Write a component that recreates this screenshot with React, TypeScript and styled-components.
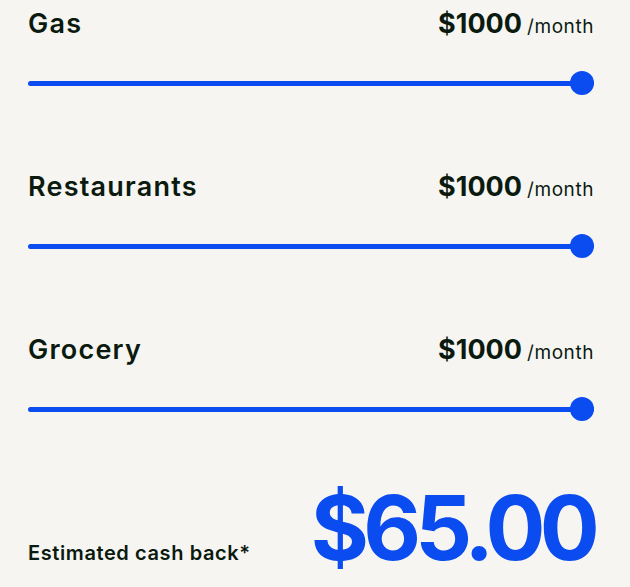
import React, { useState } from "react";
import styled, { createGlobalStyle } from "styled-components";

const GlobalStyle = createGlobalStyle`
    html, body {
        margin: 0;
        padding: 0;
        background: #f6f5f2;
    }
    body {
        font-family: Inter, "Noto Sans", sans-serif;
        color: #0b1a0f;
    }
`;

const Container = styled.div`
    padding: 8px 36px 0 28px;
    display: flex;
    flex-direction: column;
`;

const Category = styled.div`
    display: flex;
    flex-direction: column;
    margin-bottom: 76px;
`;

const LabelRow = styled.div`
    display: flex;
    justify-content: space-between;
    align-items: baseline;
    height: 31px;
`;

const Name = styled.span`
    font-size: 27px;
    font-weight: 600;
    letter-spacing: 0.045em;
    line-height: 31px;
`;

const Amount = styled.span`
    display: flex;
    align-items: baseline;
    gap: 5px;
`;

const Price = styled.span`
    font-size: 27px;
    font-weight: 700;
    letter-spacing: 0;
    line-height: 31px;
`;

const Period = styled.span`
    font-size: 19px;
    font-weight: 400;
    letter-spacing: 0.03em;
`;

const Range = styled.input`
    -webkit-appearance: none;
    appearance: none;
    width: 100%;
    height: 24px;
    margin: 32px 0 0;
    background: transparent;
    &::-webkit-slider-runnable-track {
        height: 5px;
        border-radius: 3px;
        background: #0a4cf0;
    }
    &::-webkit-slider-thumb {
        -webkit-appearance: none;
        width: 24px;
        height: 24px;
        border-radius: 50%;
        background: #0a4cf0;
        margin-top: -9.5px;
        border: none;
    }
    &:focus {
        outline: none;
    }
`;

const Summary = styled.div`
    display: flex;
    justify-content: space-between;
    align-items: baseline;
    margin-top: -14px;
`;

const SummaryLabel = styled.span`
    font-size: 20px;
    font-weight: 600;
    letter-spacing: 0.03em;
`;

const Total = styled.span`
    font-size: 89px;
    font-weight: 700;
    color: #0a4cf0;
    letter-spacing: -0.065em;
    line-height: 1;
`;

interface CategoryInterface {
    id: string,
    name: string,
    value: number,
}

const initial: CategoryInterface[] = [
    { id: "gas", name: "Gas", value: 1000 },
    { id: "restaurants", name: "Restaurants", value: 1000 },
    { id: "grocery", name: "Grocery", value: 1000 },
];

function App() {
    const [items, setItems] = useState<CategoryInterface[]>(initial);
    const total = (items[0].value * 0.03 + items[1].value * 0.02 + items[2].value * 0.015).toFixed(2);
    return (
        <>
            <GlobalStyle />
            <Container>
                {items.map((item) => <Category key={item.id}>
                    <LabelRow>
                        <Name>{item.name}</Name>
                        <Amount>
                            <Price>${item.value}</Price>
                            <Period>/month</Period>
                        </Amount>
                    </LabelRow>
                    <Range
                        type="range"
                        min={0}
                        max={1000}
                        step={50}
                        value={item.value}
                        onChange={(e) => {
                            const v = Number(e.target.value);
                            setItems(items.map((i) => i.id === item.id ? { ...i, value: v } : i));
                        }}
                    />
                </Category>)}
                <Summary>
                    <SummaryLabel>Estimated cash back*</SummaryLabel>
                    <Total>${total}</Total>
                </Summary>
            </Container>
        </>
    );
}

export default App;
